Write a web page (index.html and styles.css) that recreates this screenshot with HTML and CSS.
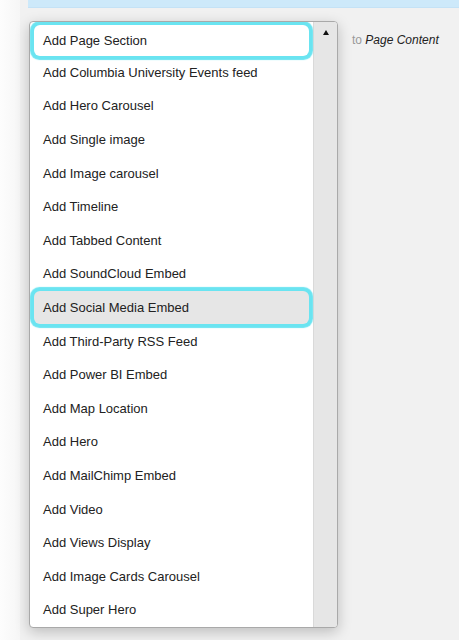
FILE: index.html
```html
<!DOCTYPE html>
<html lang="en">
<head>
  <meta charset="UTF-8">
  <title>Add content</title>
  <link rel="stylesheet" href="styles.css">
</head>
<body>

  <div class="side"></div>

  <div class="main">
    <div class="top-bar"></div>

    <div class="add-row">
      <div class="dropdown">
        <ul class="options">
          <li class="option focused">Add Page Section</li>
          <li class="option">Add Columbia University Events feed</li>
          <li class="option">Add Hero Carousel</li>
          <li class="option">Add Single image</li>
          <li class="option">Add Image carousel</li>
          <li class="option">Add Timeline</li>
          <li class="option">Add Tabbed Content</li>
          <li class="option">Add SoundCloud Embed</li>
          <li class="option hovered">Add Social Media Embed</li>
          <li class="option">Add Third-Party RSS Feed</li>
          <li class="option">Add Power BI Embed</li>
          <li class="option">Add Map Location</li>
          <li class="option">Add Hero</li>
          <li class="option">Add MailChimp Embed</li>
          <li class="option">Add Video</li>
          <li class="option">Add Views Display</li>
          <li class="option">Add Image Cards Carousel</li>
          <li class="option">Add Super Hero</li>
        </ul>
        <div class="scroll">
          <span class="arrow-up"></span>
        </div>
      </div>

      <div class="target">to <em>Page Content</em></div>
    </div>
  </div>

</body>
</html>
```

FILE: styles.css
```css
body {
  margin: 0;
  display: flex;
  min-height: 640px;
  background: #f1f1f1;
  font-family: "Liberation Sans", Arial, sans-serif;
  color: #222;
}

.side {
  width: 20px;
  flex-shrink: 0;
  background: linear-gradient(to right, #fdfdfd, #f6f6f6);
}

.main {
  flex: 1;
  padding-left: 8px;
}

.top-bar {
  height: 7px;
  background: #cde9fa;
  border-bottom: 1px solid #c4e2f6;
}

.add-row {
  display: flex;
  align-items: flex-start;
  gap: 14px;
  margin-top: 13px;
}

.dropdown {
  display: flex;
  width: 307px;
  margin-left: 1px;
  border: 1px solid #a9a9a9;
  border-radius: 4px;
  background: #fff;
  box-shadow: 0 4px 14px rgba(0, 0, 0, 0.22);
  overflow: hidden;
}

.options {
  flex: 1;
  list-style: none;
  margin: 0;
  padding: 0;
}

.option {
  position: relative;
  height: 33.6px;
  box-sizing: border-box;
  display: flex;
  align-items: center;
  padding-left: 13px;
  font-size: 13px;
}

.option.focused,
.option.hovered {
  margin: 0 4px;
  padding-left: 9px;
  border-radius: 6px;
  box-shadow: 0 0 1px 3.5px #6ae4f1;
}

.option.focused {
  margin-top: 2.5px;
  height: 31.1px;
}

.option.hovered {
  background: #e6e6e6;
}

.scroll {
  width: 23px;
  background: #e6e6e6;
  border-left: 1px solid #d9d9d9;
  display: flex;
  justify-content: center;
  padding-top: 8px;
}

.arrow-up {
  width: 0;
  height: 0;
  border-left: 3.5px solid transparent;
  border-right: 3.5px solid transparent;
  border-bottom: 5px solid #111;
}

.target {
  font-size: 12px;
  color: #999;
  margin-top: 12px;
}

.target em {
  color: #222;
}
```
